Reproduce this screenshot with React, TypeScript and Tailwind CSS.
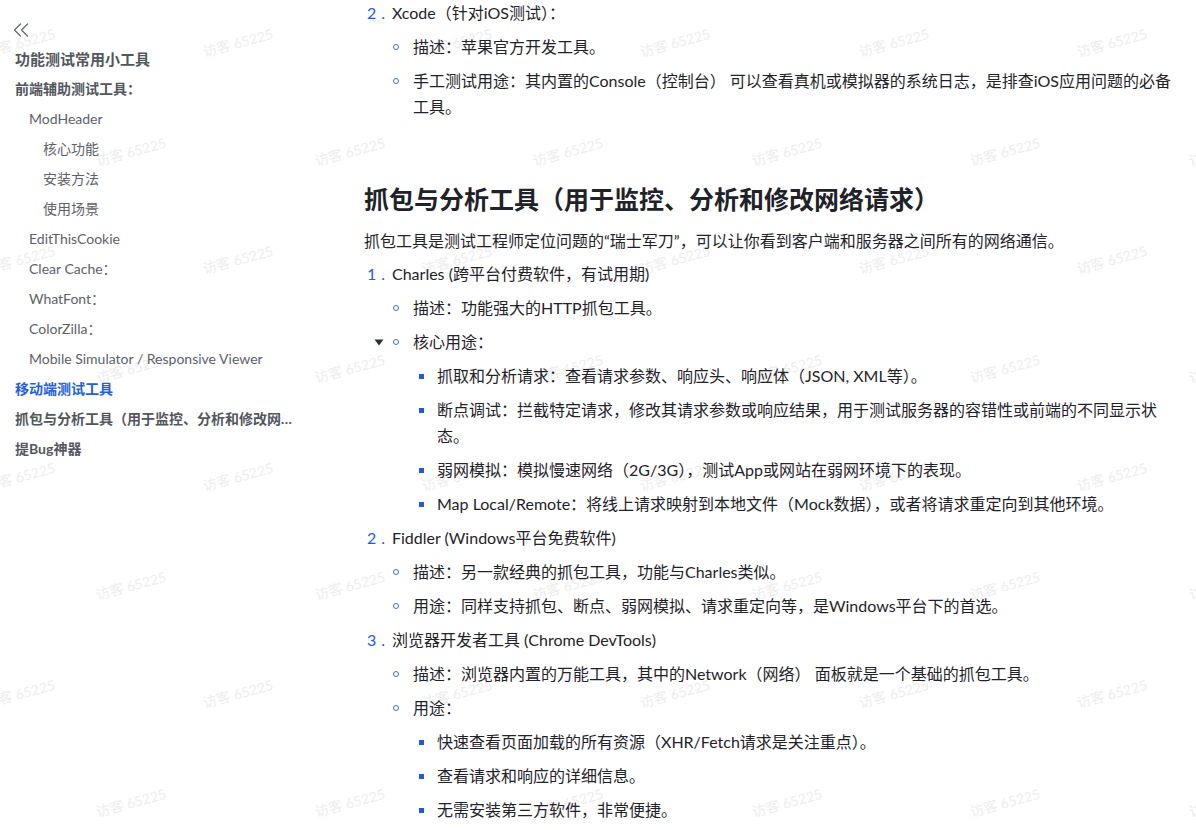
import React from "react";

type SideItem = { t: string; lvl: 0 | 1 | 2; bold?: boolean; active?: boolean; big?: boolean };

const sideItems: SideItem[] = [
  { t: "功能测试常用小工具", lvl: 0, bold: true, big: true },
  { t: "前端辅助测试工具：", lvl: 0, bold: true },
  { t: "ModHeader", lvl: 1 },
  { t: "核心功能", lvl: 2 },
  { t: "安装方法", lvl: 2 },
  { t: "使用场景", lvl: 2 },
  { t: "EditThisCookie", lvl: 1 },
  { t: "Clear Cache：", lvl: 1 },
  { t: "WhatFont：", lvl: 1 },
  { t: "ColorZilla：", lvl: 1 },
  { t: "Mobile Simulator / Responsive Viewer", lvl: 1 },
  { t: "移动端测试工具", lvl: 0, bold: true, active: true },
  { t: "抓包与分析工具（用于监控、分析和修改网络请求）", lvl: 0, bold: true },
  { t: "提Bug神器", lvl: 0, bold: true },
];

const lvlPad: Record<number, string> = {
  0: "pl-[15px]",
  1: "pl-[29px]",
  2: "pl-[43px]",
};

function Sidebar() {
  return (
    <div className="w-[300px] shrink-0 pt-[22px]">
      <div className="h-[16px] pl-[12px]">
        <svg width="18" height="16" viewBox="0 0 18 16" fill="none">
          <path d="M8.5 2 L2.5 8 L8.5 14" stroke="#646a73" strokeWidth="1.3" strokeLinecap="round" strokeLinejoin="round" />
          <path d="M15.5 2 L9.5 8 L15.5 14" stroke="#646a73" strokeWidth="1.3" strokeLinecap="round" strokeLinejoin="round" />
        </svg>
      </div>
      <div className="mt-[6px] flex flex-col">
        {sideItems.map((it, i) => (
          <div key={i} className={`h-[30px] flex items-center pr-[1px] ${lvlPad[it.lvl]}`}>
            <span
              className={`block w-full truncate leading-[20px] ${it.big ? "text-[15px]" : "text-[14px]"} ${
                it.bold ? "font-bold" : "font-normal"
              } ${it.active ? "text-[#2560d6]" : it.bold ? "text-[#52575e]" : "text-[#5d6168]"}`}
            >
              {it.t}
            </span>
          </div>
        ))}
      </div>
    </div>
  );
}

function Num({ n }: { n: number }) {
  return (
    <span className="w-[28px] shrink-0 h-[26px] flex items-center pl-[3px] text-[#245bdb]">
      <span>{n}</span>
      <span className="ml-[5px]">.</span>
    </span>
  );
}

function Circle() {
  return (
    <span className="w-[21px] shrink-0 h-[26px] flex items-center">
      <span className="ml-[1px] w-[6px] h-[6px] rounded-full border-[1.5px] border-[#3a6ee0]" />
    </span>
  );
}

function Square() {
  return (
    <span className="w-[24px] shrink-0 h-[26px] flex items-center">
      <span className="ml-[6px] w-[5px] h-[5px] bg-[#2558d4]" />
    </span>
  );
}

function L2({ children, toggle }: { children: React.ReactNode; toggle?: boolean }) {
  return (
    <div className="relative mt-[8px] flex">
      {toggle && (
        <span className="absolute left-[-18px] top-0 h-[26px] flex items-center">
          <svg width="10" height="7" viewBox="0 0 10 7">
            <path d="M0.5 0.5 H9.5 L5 6.5 Z" fill="#2b2f36" />
          </svg>
        </span>
      )}
      <Circle />
      <div className="flex-1">{children}</div>
    </div>
  );
}

function L3({ children }: { children: React.ReactNode }) {
  return (
    <div className="mt-[8px] flex">
      <Square />
      <div className="flex-1">{children}</div>
    </div>
  );
}

function L1({ n, title, children }: { n: number; title: React.ReactNode; children?: React.ReactNode }) {
  return (
    <div className="mt-[8px] first:mt-0">
      <div className="flex">
        <Num n={n} />
        <div className="flex-1">{title}</div>
      </div>
      <div className="pl-[28px]">{children}</div>
    </div>
  );
}

function Watermarks() {
  const marks: { x: number; y: number }[] = [];
  for (let m = 0; m < 5; m++) {
    for (let k = -1; k < 7; k++) {
      marks.push({ x: 238 + k * 218.5, y: 43 + m * 217 });
      marks.push({ x: 131 + k * 218.5, y: 152 + m * 217 });
    }
  }
  return (
    <div className="absolute inset-0 pointer-events-none overflow-hidden">
      {marks.map((p, i) => (
        <span
          key={i}
          className="absolute w-[80px] h-[20px] flex items-center justify-center whitespace-nowrap text-[14px] leading-[20px] text-[#ededed] -rotate-[15deg]"
          style={{ left: p.x - 40, top: p.y - 10 }}
        >
          访客 65225
        </span>
      ))}
    </div>
  );
}

export default function App() {
  return (
    <div className="relative w-[1196px] h-[830px] overflow-hidden bg-white font-['Lato','Noto_Sans_CJK_SC',sans-serif]">
      <Watermarks />
      <div className="relative flex">
        <Sidebar />
        <div className="flex-1 pl-[64px] text-[16px] leading-[26px] text-[#1f2329]">
          <div>
            <L1 n={2} title={<>Xcode（针对iOS测试）：</>}>
              <L2>描述：苹果官方开发工具。</L2>
              <L2>
                手工测试用途：其内置的Console（控制台） 可以查看真机或模拟器的系统日志，是排查iOS应用问题的必备
                <br />
                工具。
              </L2>
            </L1>
          </div>

          <h2 className="mt-[61px] text-[25px] leading-[36px] font-bold text-[#1f2329]">
            抓包与分析工具（用于监控、分析和修改网络请求）
          </h2>
          <p className="mt-[11px]">抓包工具是测试工程师定位问题的“瑞士军刀”，可以让你看到客户端和服务器之间所有的网络通信。</p>

          <div className="mt-[7px]">
            <L1 n={1} title={<>Charles (跨平台付费软件，有试用期)</>}>
              <L2>描述：功能强大的HTTP抓包工具。</L2>
              <L2 toggle>
                核心用途：
                <L3>抓取和分析请求：查看请求参数、响应头、响应体（JSON, XML等）。</L3>
                <L3>
                  断点调试：拦截特定请求，修改其请求参数或响应结果，用于测试服务器的容错性或前端的不同显示状
                  <br />
                  态。
                </L3>
                <L3>弱网模拟：模拟慢速网络（2G/3G），测试App或网站在弱网环境下的表现。</L3>
                <L3>Map Local/Remote：将线上请求映射到本地文件（Mock数据），或者将请求重定向到其他环境。</L3>
              </L2>
            </L1>
            <L1 n={2} title={<>Fiddler (Windows平台免费软件)</>}>
              <L2>描述：另一款经典的抓包工具，功能与Charles类似。</L2>
              <L2>用途：同样支持抓包、断点、弱网模拟、请求重定向等，是Windows平台下的首选。</L2>
            </L1>
            <L1 n={3} title={<>浏览器开发者工具 (Chrome DevTools)</>}>
              <L2>描述：浏览器内置的万能工具，其中的Network（网络） 面板就是一个基础的抓包工具。</L2>
              <L2>
                用途：
                <L3>快速查看页面加载的所有资源（XHR/Fetch请求是关注重点）。</L3>
                <L3>查看请求和响应的详细信息。</L3>
                <L3>无需安装第三方软件，非常便捷。</L3>
              </L2>
            </L1>
          </div>
        </div>
      </div>
    </div>
  );
}
